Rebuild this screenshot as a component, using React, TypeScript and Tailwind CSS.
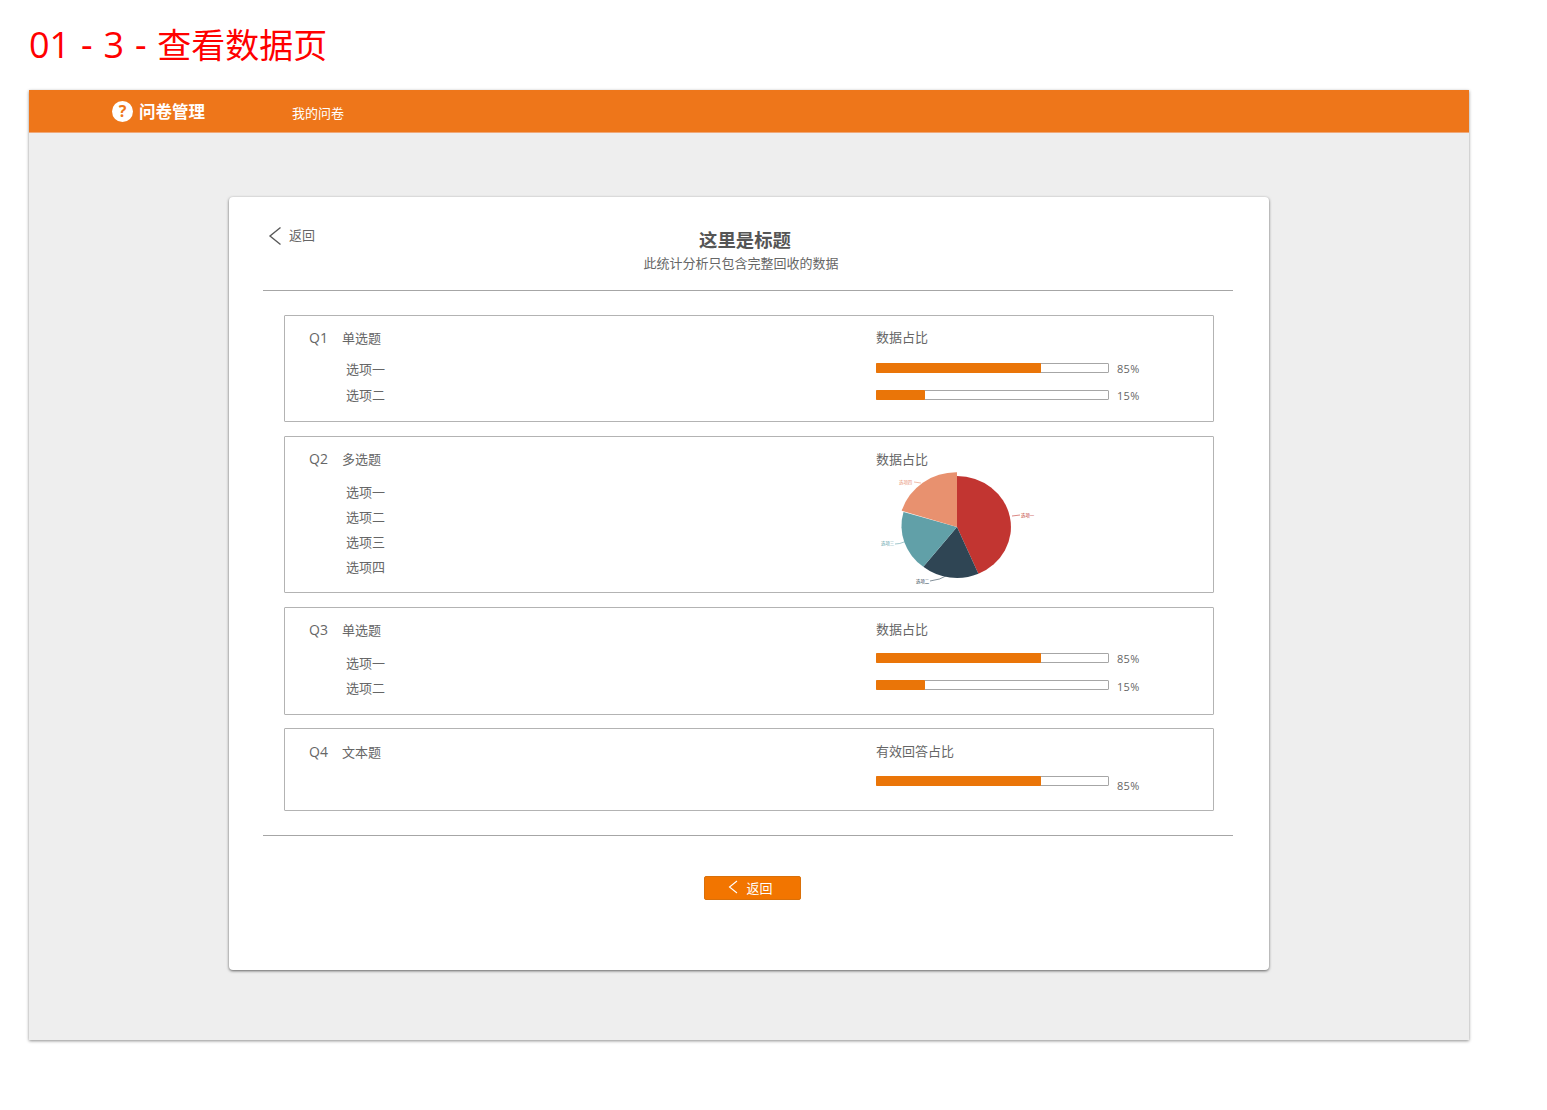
const font = { fontFamily: '"Open Sans", "Noto Sans CJK SC", sans-serif' };

function Bar({
  fill,
  pct,
  className,
  pctClass = "mt-[2px]",
}: {
  fill: string;
  pct: string;
  className: string;
  pctClass?: string;
}) {
  return (
    <div className={`flex items-center ${className}`}>
      <div className="h-[10px] w-[233px] rounded-[1px] border border-[#a6a6a6] bg-white">
        <div className={`-m-px h-[10px] rounded-[1px] bg-[#ea7508] ${fill}`} />
      </div>
      <span className={`ml-[8px] text-[11px] leading-[14px] tracking-[0.3px] text-[#666] ${pctClass}`}>{pct}</span>
    </div>
  );
}

function Question({
  no,
  type,
  className,
  children,
  options,
}: {
  no: string;
  type: string;
  className: string;
  children: React.ReactNode;
  options: { label: string; className: string }[];
}) {
  return (
    <div className={`ml-[21px] flex w-[930px] rounded-[1px] border border-[#b3b3b3] pl-[24px] text-[13px] text-[#666] ${className}`}>
      <div className="w-[567px]">
        <div className="flex h-[20px] items-center">
          <span className="-mt-[3px] w-[33px] text-[14px]">{no}</span>
          <span>{type}</span>
        </div>
        {options.map((o) => (
          <div key={o.label} className={`ml-[37px] h-[20px] leading-[20px] ${o.className}`}>
            {o.label}
          </div>
        ))}
      </div>
      <div>{children}</div>
    </div>
  );
}

function Pie() {
  return (
    <svg width="185" height="120" viewBox="0 0 185 120" className="-ml-[12px] block">
      {/* center of pie sits at 93,57 */}
      <path d="M93 57 L93 6 A54 51 0 0 1 114.4 103.8 Z" fill="#c23531" />
      <path d="M93 57 L114.4 103.8 A54 51 0 0 1 59.3 96.8 Z" fill="#2f4554" />
      <path d="M93 57 L59.3 96.8 A54 51 0 0 1 39.5 42 Z" fill="#61a0a8" />
      <path d="M93 57 L37.7 40.7 A57 55 0 0 1 93 2.3 Z" fill="#e8916f" />
      <g fontSize="4.4" fontFamily='"Noto Sans CJK SC", sans-serif'>
        <path d="M148 46 L156 45" stroke="#c23531" strokeWidth="0.6" fill="none" />
        <text x="157" y="47" fill="#c23531">选项一</text>
        <path d="M66 111 Q76 110 84 105" stroke="#2f4554" strokeWidth="0.6" fill="none" />
        <text x="52" y="113" fill="#2f4554">选项二</text>
        <path d="M31 74 Q36 74 40 72" stroke="#61a0a8" strokeWidth="0.6" fill="none" />
        <text x="17" y="75" fill="#61a0a8">选项三</text>
        <path d="M50 12 L57 13" stroke="#e8916f" strokeWidth="0.6" fill="none" />
        <text x="35" y="14" fill="#e8916f">选项四</text>
      </g>
    </svg>
  );
}

export default function App() {
  return (
    <div className="h-[1110px] w-[1547px] bg-white" style={font}>
      {/* Page title */}
      <div className="flex h-[90px] items-start pl-[29px] pt-[20px] text-[36px] font-normal leading-[50px] text-[#ff0000]">
        <span className="[word-spacing:1.5px]">
          01 - 3 - <span className="text-[34px]">查看数据页</span>
        </span>
      </div>

      <div className="ml-[29px] h-[950px] w-[1440px] bg-[#eeeeee] shadow-[0_1px_3px_rgba(0,0,0,0.45)]">
        {/* Header */}
        <div className="flex h-[43px] items-center border-b border-[#f0a878] bg-[#ee761a] pl-[83px] text-white">
          <div className="flex h-[21px] w-[21px] items-center justify-center rounded-full bg-white text-[16px] font-bold leading-none text-[#ee761a]">
            ?
          </div>
          <span className="ml-[6px] mt-[3px] text-[16.5px] font-bold">问卷管理</span>
          <span className="ml-[87px] mt-[5px] text-[13px]">我的问卷</span>
        </div>

        {/* Card */}
        <div className="ml-[200px] mt-[64px] h-[773px] w-[1040px] rounded-[4px] bg-white pl-[34px] pr-[36px] shadow-[0_1px_3px_rgba(0,0,0,0.6)]">
          <div className="flex h-[94px] border-b border-[#a6a6a6]">
            <div className="mt-[29px] flex h-[20px] w-[282px] items-center pl-[5px] text-[13px] text-[#666]">
              <svg width="14" height="20" viewBox="0 0 14 20" fill="none" stroke="#595959" strokeWidth="1.4">
                <path d="M12.5 1.5 L2 10 L12.5 18.5" />
              </svg>
              <span className="ml-[7px]">返回</span>
            </div>
            <div className="w-[400px] pt-[30px] text-center">
              <div className="h-[26px] text-[18.4px] font-bold leading-[26px] text-[#555]">这里是标题</div>
              <div className="pr-[8px] text-[13px] leading-[20px] text-[#666]">此统计分析只包含完整回收的数据</div>
            </div>
          </div>

          <Question
            no="Q1"
            type="单选题"
            className="mt-[24px] h-[107px] pt-[13px]"
            options={[
              { label: "选项一", className: "mt-[10px]" },
              { label: "选项二", className: "mt-[6px]" },
            ]}
          >
            <div className="-mt-[2px] h-[20px] leading-[20px]">数据占比</div>
            <Bar fill="w-[165px]" pct="85%" className="mt-[14px] h-[14px]" />
            <Bar fill="w-[49px]" pct="15%" className="mt-[13px] h-[14px]" />
          </Question>

          <Question
            no="Q2"
            type="多选题"
            className="mt-[14px] h-[157px] pt-[13px]"
            options={[
              { label: "选项一", className: "mt-[12px]" },
              { label: "选项二", className: "mt-[5px]" },
              { label: "选项三", className: "mt-[5px]" },
              { label: "选项四", className: "mt-[5px]" },
            ]}
          >
            <div className="-mt-[1px] h-[20px] leading-[20px]">数据占比</div>
            <div className="mt-[1px]">
              <Pie />
            </div>
          </Question>

          <Question
            no="Q3"
            type="单选题"
            className="mt-[14px] h-[108px] pt-[13px]"
            options={[
              { label: "选项一", className: "mt-[12px]" },
              { label: "选项二", className: "mt-[5px]" },
            ]}
          >
            <div className="-mt-[2px] h-[20px] leading-[20px]">数据占比</div>
            <Bar fill="w-[165px]" pct="85%" className="mt-[12px] h-[14px]" />
            <Bar fill="w-[49px]" pct="15%" className="mt-[13px] h-[14px]" pctClass="mt-[4px]" />
          </Question>

          <Question no="Q4" type="文本题" className="mt-[13px] h-[83px] pt-[14px]" options={[]}>
            <div className="-mt-[2px] h-[20px] leading-[20px]">有效回答占比</div>
            <Bar fill="w-[165px]" pct="85%" className="mt-[15px] h-[14px] !items-start" pctClass="mt-[3px]" />
          </Question>

          <div className="mt-[24px] border-t border-[#a6a6a6]" />

          <div className="ml-[9px] mt-[40px] flex justify-center">
            <button
              type="button"
              className="flex h-[24px] w-[97px] items-center justify-center rounded-[2px] border border-[#d9700a] bg-[#f27500] pr-[4px] text-[13px] text-white"
            >
              <svg width="10" height="14" viewBox="0 0 10 14" fill="none" stroke="#ffffff" strokeWidth="1.1" className="-mt-[2px]">
                <path d="M9 1 L1.5 7 L9 13" />
              </svg>
              <span className="ml-[8px] mt-[2px]">返回</span>
            </button>
          </div>
        </div>
      </div>
    </div>
  );
}
